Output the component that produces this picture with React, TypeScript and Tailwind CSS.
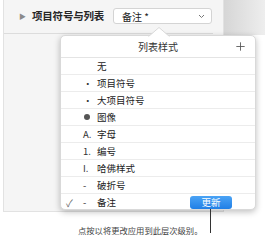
import { Plus } from 'lucide-react';

const rows = [
    { mark: '', text: '无' },
    { mark: '•', text: '项目符号' },
    { mark: '•', text: '大项目符号' },
    { mark: 'dot', text: '图像' },
    { mark: 'A.', text: '字母' },
    { mark: '1.', text: '编号' },
    { mark: 'I.', text: '哈佛样式' },
    { mark: '-', text: '破折号' },
    { mark: '-', text: '备注', checked: true },
];

const font = "font-['Noto_Sans_CJK_SC','Noto_Sans',sans-serif]";

const App = () => {
    return (
        <div className={`relative w-[265px] h-[242px] bg-white overflow-hidden ${font}`}>
            <div className="flex h-[212px]">
                {/* inspector panel */}
                <div className="w-[221px] h-full bg-[#f5f5f5] border-l border-[#e2e2e2] ml-[3px] border-b border-r">
                    <div className="flex items-center h-[34px] pl-[14px] pb-[1px] border-b border-[#dcdcdc] mr-[10px]">
                        <span className="text-[7px] text-[#8a8a8a] mr-[6px] ml-[1px]">▶</span>
                        <span className="text-[10.5px] font-semibold text-[#262626] tracking-[-0.2px]">项目符号与列表</span>
                        <div className="ml-[9px] w-[99px] h-[16px] bg-white border border-[#d4d4d4] rounded-[3px] flex items-center pl-[8px] pr-[6px]">
                            <span className="text-[10px] text-[#222]">备注 *</span>
                            <svg className="ml-auto" width="7" height="5" viewBox="0 0 7 5">
                                <path d="M1 1l2.5 2.5L6 1" fill="none" stroke="#777" strokeWidth="1" />
                            </svg>
                        </div>
                    </div>
                </div>
                <div className="flex-1">
                    <div className="h-[35px] bg-gradient-to-r from-[#d6d6d6] to-[#eeeeee]" />
                </div>
            </div>

            {/* popover */}
            <div className="absolute left-[60px] top-[35px] w-[196px] h-[175px] bg-white rounded-[5px] border border-[#d9d9d9] shadow-[0_2px_6px_rgba(0,0,0,0.25)]">
                <svg className="absolute -top-[9px] left-[87px]" width="22" height="10" viewBox="0 0 22 10">
                    <path d="M0 10L11 0.5L22 10" fill="white" stroke="#d9d9d9" strokeWidth="1" />
                    <rect x="0" y="9.5" width="22" height="2" fill="white" />
                </svg>
                <div className="relative flex items-center justify-center h-[22px] border-b border-[#e4e4e4]">
                    <span className="text-[10px] text-[#333]">列表样式</span>
                    <Plus className="absolute right-[8px] top-[4px]" size={13} strokeWidth={1.6} color="#555" />
                </div>
                {rows.map((r, i) => (
                    <div key={i} className={`flex items-center h-[17px] ${i < rows.length - 1 ? 'border-b border-[#ececec]' : ''}`}>
                        <span className="w-[22px] pl-[5px] text-[10px] text-[#666]">{r.checked ? '✓' : ''}</span>
                        <span className="w-[14px] text-[9.5px] text-[#333] flex items-center">
                            {r.mark === 'dot' ? <span className="w-[6px] h-[6px] rounded-full bg-[#555] ml-[1px]" /> : r.mark}
                        </span>
                        <span className="text-[9.5px] text-[#1a1a1a]">{r.text}</span>
                        {r.checked && (
                            <span className="ml-auto mr-[23px] w-[42px] h-[13px] rounded-[3px] bg-gradient-to-b from-[#4aa3f5] to-[#1f7fe6] text-white text-[9.5px] flex items-center justify-center">更新</span>
                        )}
                    </div>
                ))}
            </div>

            {/* callout */}
            <div className="absolute left-[210px] top-[209px] w-[1px] h-[24px] bg-[#333]" />
            <div className="pl-[78px] pt-[14px] text-[8.3px] text-[#444] leading-none">点按以将更改应用到此层次级别。</div>
        </div>
    );
};

export default App;
